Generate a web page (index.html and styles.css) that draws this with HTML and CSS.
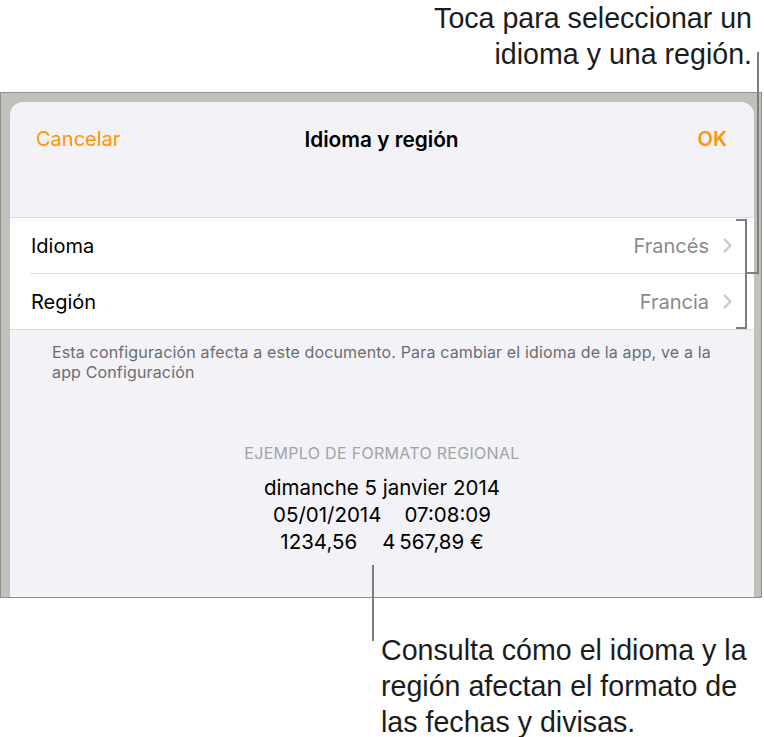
FILE: index.html
```html
<!DOCTYPE html>
<html lang="es">
<head>
<meta charset="utf-8">
<title>Idioma y región</title>
<link rel="stylesheet" href="styles.css">
</head>
<body>
<div class="page">
  <div class="callout callout-top">Toca para seleccionar un<br>idioma y una región.</div>

  <div class="frame">
    <div class="panel">
      <div class="nav">
        <span class="nav-btn">Cancelar</span>
        <span class="nav-title">Idioma y región</span>
        <span class="nav-btn nav-ok">OK</span>
      </div>

      <div class="table">
        <div class="row row-sep">
          <span class="row-label">Idioma</span>
          <span class="row-value">Francés</span>
          <svg class="chev" width="9" height="15" viewBox="0 0 9 15"><path d="M1.5 1.5 L7.5 7.5 L1.5 13.5" fill="none" stroke="#c4c4c7" stroke-width="2" stroke-linecap="round" stroke-linejoin="round"/></svg>
        </div>
        <div class="row">
          <span class="row-label">Región</span>
          <span class="row-value">Francia</span>
          <svg class="chev" width="9" height="15" viewBox="0 0 9 15"><path d="M1.5 1.5 L7.5 7.5 L1.5 13.5" fill="none" stroke="#c4c4c7" stroke-width="2" stroke-linecap="round" stroke-linejoin="round"/></svg>
        </div>
      </div>

      <p class="footer-note">Esta configuración afecta a este documento. Para cambiar el idioma de la app, ve a la app Configuración</p>

      <div class="example">
        <div class="example-head">EJEMPLO DE FORMATO REGIONAL</div>
        <div class="example-line">dimanche 5 janvier 2014</div>
        <div class="example-line"><span>05/01/2014</span><span class="gap">07:08:09</span></div>
        <div class="example-line"><span>1234,56</span><span class="gap gap-wide">4&#8239;567,89&nbsp;€</span></div>
      </div>
    </div>
  </div>

  <div class="callout callout-bottom">Consulta cómo el idioma y la<br>región afectan el formato de<br>las fechas y divisas.</div>

  <div class="lead lead-top-v"></div>
  <div class="lead lead-top-h"></div>
  <div class="bracket"></div>
  <div class="lead lead-bottom-v"></div>
</div>
</body>
</html>
```
FILE: styles.css
```css
* { box-sizing: border-box; }
html, body { margin: 0; padding: 0; background: #fff; }
.page {
  position: relative;
  width: 764px;
  height: 737px;
  overflow: hidden;
}
.callout {
  font-family: "Liberation Sans", Arial, sans-serif;
  font-size: 28.6px;
  line-height: 36px;
  color: #1c1c1c;
}
.callout-top {
  height: 92px;
  text-align: right;
  padding-right: 12px;
}
.frame {
  width: 762px;
  height: 506px;
  border: 1px solid #8e8e8e;
  background: #bfc1bb;
  padding: 9px 7px 0 9px;
}
.panel {
  height: 100%;
  background: #f2f2f7;
  border-radius: 13px 13px 0 0;
  font-family: Inter, "Noto Sans", sans-serif;
  overflow: hidden;
}
.nav {
  height: 74px;
  display: grid;
  grid-template-columns: 1fr auto 1fr;
  align-items: center;
  padding: 0 27px 0 26px;
  font-size: 20px;
}
.nav-btn { color: #ff9500; }
.nav-ok { font-weight: 600; justify-self: end; }
.nav-title { font-weight: 600; color: #000; font-size: 20.8px; }
.table {
  margin-top: 41px;
  background: #fff;
  border-top: 1px solid #d9d9de;
  border-bottom: 1px solid #d9d9de;
}
.row {
  height: 55px;
  margin-left: 20px;
  padding: 0 22px 0 1px;
  display: flex;
  align-items: center;
  font-size: 20px;
}
.row-sep { height: 56px; border-bottom: 1px solid #d9d9de; }
.row-label { flex: 1; color: #000; }
.row-value { color: #8a8a8e; margin-right: 14px; }
.chev { display: block; }
.footer-note {
  margin: 12px 0 0;
  padding: 0 36px 0 42px;
  font-size: 16px;
  letter-spacing: 0.15px;
  line-height: 20px;
  color: #6d6d72;
}
.example {
  margin-top: 61px;
  text-align: center;
}
.example-head {
  font-size: 16px;
  letter-spacing: 0.3px;
  line-height: 20px;
  color: #a3a3a8;
  margin-bottom: 11px;
}
.example-line {
  font-size: 20.5px;
  line-height: 27px;
  color: #000;
}
.gap { margin-left: 23px; }
.gap-wide { margin-left: 25px; }
.callout-bottom {
  margin-top: 34px;
  padding-left: 381px;
}
.lead { position: absolute; background: #7d7d7d; }
.lead-top-v { left: 757px; top: 52px; width: 2px; height: 222px; }
.lead-top-h { left: 747px; top: 272px; width: 12px; height: 2px; }
.bracket {
  position: absolute;
  left: 736px;
  top: 219px;
  width: 11px;
  height: 110px;
  border: 2px solid #7d7d7d;
  border-left: none;
}
.lead-bottom-v { left: 372px; top: 565px; width: 2px; height: 76px; }
```
